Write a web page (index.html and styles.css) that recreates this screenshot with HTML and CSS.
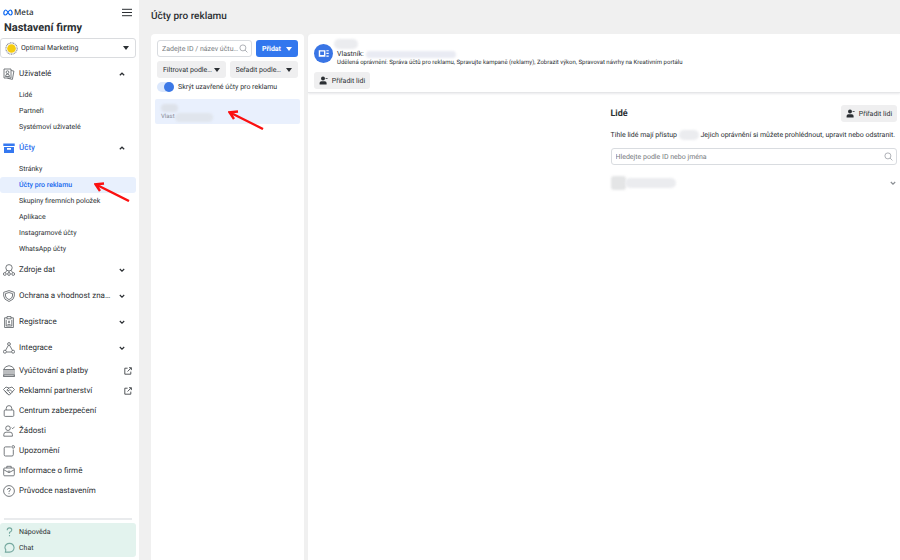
FILE: index.html
```
<!DOCTYPE html>
<html lang="cs">
<head>
    <meta charset="UTF-8">
    <meta name="viewport" content="width=device-width, initial-scale=1.0">
    <title>Nastavení firmy - Účty pro reklamu</title>
    <link rel="stylesheet" href="styles.css">
</head>

<body>
    <!-- Shared icons -->
    <svg class="sprite" aria-hidden="true">
        <symbol id="up" viewBox="0 0 8 8"><path d="M1.800 5.300 4 3.200l2.200 2.100" /></symbol>
        <symbol id="down" viewBox="0 0 8 8"><path d="M1.800 3 4 5.100 6.200 3" /></symbol>
        <symbol id="external" viewBox="0 0 8 8"><path d="M3.600 1.200H.8v6h6V4.600M5 .7h2.400v2.400M7.200.9 3.600 4.500" /></symbol>
        <symbol id="search" viewBox="0 0 9 9"><circle cx="3.900" cy="3.900" r="3" /><path d="M6.100 6.100 8.400 8.400" /></symbol>
        <symbol id="person" viewBox="0 0 9 9"><circle cx="4" cy="2.600" r="2" /><path d="M.6 8.400V7q0-1.800 1.800-1.800h3.400q1.800 0 1.800 1.800v1.400zM6.600 2h2v.8h-2z" /></symbol>
        <symbol id="arrow" viewBox="0 0 36 20"><path d="M35 19 2 2.500M10 1.500 1.500 2.300 6 9" /></symbol>
    </svg>

    <div class="app">
        <nav class="sidebar">
            <div class="brand">
                <svg class="brand-mark" viewBox="0 0 10 7"><path d="M1 5.200C.4 2.800 1.700 1 2.800 1 4.400 1 5.600 6 7.400 6 8.900 6 9.300 4.400 9 3 8.700 1.700 8 1 7.200 1 5.500 1 4.400 6 2.400 6 1.600 6 1.100 5.800 1 5.200z" /></svg>
                <span class="brand-name">Meta</span>
                <button class="burger" type="button" aria-label="Nabídka"><svg viewBox="0 0 10 8"><path d="M0 .8h10M0 4h10M0 7.200h10" /></svg></button>
            </div>
            <h1>Nastavení firmy</h1>
            <div class="business">
                <svg class="business-logo" viewBox="0 0 12 12"><circle class="ring" cx="6" cy="6" r="5.200" /><circle class="sun" cx="6" cy="6" r="4" /></svg>
                <select aria-label="Firma"><option>Optimal Marketing</option></select>
            </div>

            <ul class="menu">
                <li>
                    <button class="group" type="button" aria-expanded="true">
                        <svg class="icon" viewBox="0 0 12 12"><path d="M1 1h7v9H1zM8.200 2.500l2.700.6-1.500 8.300-5-1.200M2.500 8.500q0-2.300 2-2.300t2 2.300z" /><circle cx="4.500" cy="4.200" r="1.400" /></svg>
                        <span>Uživatelé</span><svg class="chevron"><use href="#up" /></svg>
                    </button>
                    <ul class="submenu">
                        <li><a href="#">Lidé</a></li>
                        <li><a href="#">Partneři</a></li>
                        <li><a href="#">Systémoví uživatelé</a></li>
                    </ul>
                </li>
                <li>
                    <button class="group active" type="button" aria-expanded="true">
                        <svg class="icon solid" viewBox="0 0 12 12"><path d="M.3 1.500h11.400v2.600H.3zM1 5h10v6H1zM4 6v1.800h4V6z" fill-rule="evenodd" /></svg>
                        <span>Účty</span><svg class="chevron"><use href="#up" /></svg>
                    </button>
                    <ul class="submenu">
                        <li><a href="#">Stránky</a></li>
                        <li class="selected"><a href="#" aria-current="page">Účty pro reklamu</a><svg class="pointer"><use href="#arrow" /></svg></li>
                        <li><a href="#">Skupiny firemních položek</a></li>
                        <li><a href="#">Aplikace</a></li>
                        <li><a href="#">Instagramové účty</a></li>
                        <li><a href="#">WhatsApp účty</a></li>
                    </ul>
                </li>
                <li>
                    <button class="group" type="button">
                        <svg class="icon" viewBox="0 0 12 12"><circle cx="6" cy="3.800" r="3.200" /><circle cx="1.800" cy="10" r="1.400" /><circle cx="6" cy="10" r="1.400" /><circle cx="10.200" cy="10" r="1.400" /><path d="M6 7v1.600M4 6.300 2.300 8.600M8 6.300l1.700 2.300" /></svg>
                        <span>Zdroje dat</span><svg class="chevron"><use href="#down" /></svg>
                    </button>
                </li>
                <li>
                    <button class="group" type="button">
                        <svg class="icon" viewBox="0 0 12 12"><path d="M6 .6 11.300 2.300V6q0 3.600-5.300 5.500Q.7 9.600.7 6V2.300zM6 2.500 9.500 3.600V6q0 2.200-3.500 3.600Q2.500 8.200 2.500 6V3.600z" /></svg>
                        <span>Ochrana a vhodnost zna…</span><svg class="chevron"><use href="#down" /></svg>
                    </button>
                </li>
                <li>
                    <button class="group" type="button">
                        <svg class="icon" viewBox="0 0 12 12"><path d="M4 1.800H1.600v9.700h8.800V1.800H8M4 .6h4v2.200H4zM3.200 3.800v6.200h5.600V3.800M6 4.500v2.800M5 6h2M4.500 8.600h3" /></svg>
                        <span>Registrace</span><svg class="chevron"><use href="#down" /></svg>
                    </button>
                </li>
                <li>
                    <button class="group" type="button">
                        <svg class="icon" viewBox="0 0 12 12"><circle cx="6" cy="2" r="1.400" /><circle cx="1.900" cy="9.700" r="1.500" /><circle cx="10.100" cy="9.700" r="1.500" /><path d="M5.400 3.300 2.600 8.300M6.600 3.300l2.800 5M3.500 10h5" /></svg>
                        <span>Integrace</span><svg class="chevron"><use href="#down" /></svg>
                    </button>
                </li>
                <li>
                    <a class="entry" href="#">
                        <svg class="icon" viewBox="0 0 12 12"><path d="M.6 4.500Q2 1 6 .7q4 .3 5.400 3.800zM1 4.500v6M3 5v5M5 5v5M7 5v5M9 5v5M11 4.500v6M.3 10h11.400v1.500H.3z" /></svg>
                        <span>Vyúčtování a platby</span><svg class="external"><use href="#external" /></svg>
                    </a>
                </li>
                <li>
                    <a class="entry" href="#">
                        <svg class="icon" viewBox="0 0 12 12"><path d="M.5 4.500 3 2l3 1 3-1 2.500 2.500L6.500 10 5 9.500zM6 3 3.800 5.200q1 1.300 2.400 0L7 4.700l2.800 2.500M5.500 6.500l2.300 2.200M2 6l3.200 3.400" /></svg>
                        <span>Reklamní partnerství</span><svg class="external"><use href="#external" /></svg>
                    </a>
                </li>
                <li>
                    <a class="entry" href="#">
                        <svg class="icon" viewBox="0 0 12 12"><rect x="1.200" y="5" width="9.600" height="6.400" rx="1" /><path d="M3.200 5V3.500q0-2.900 2.800-2.900t2.800 2.900V5" /></svg>
                        <span>Centrum zabezpečení</span>
                    </a>
                </li>
                <li>
                    <a class="entry" href="#">
                        <svg class="icon" viewBox="0 0 12 12"><circle cx="5" cy="3.200" r="2.300" /><path d="M.8 11.200V9.500q0-2.300 2.300-2.300h4q2.300 0 2.300 2.300v1.700zM8.700 2.700l1 1 1.900-2" /></svg>
                        <span>Žádosti</span>
                    </a>
                </li>
                <li>
                    <a class="entry" href="#">
                        <svg class="icon" viewBox="0 0 12 12"><path d="M7.800 1.900H2.500q-1.300 0-1.300 1.300v6.500Q1.200 11 2.500 11H9q1.300 0 1.300-1.300V4.500" /><circle cx="10.200" cy="1.900" r="1.300" /></svg>
                        <span>Upozornění</span>
                    </a>
                </li>
                <li>
                    <a class="entry" href="#">
                        <svg class="icon" viewBox="0 0 12 12"><rect x=".7" y="3" width="10.600" height="7.800" rx="1" /><path d="M3.800 3V1.300h4.400V3M.9 4.800 6 7.700l5.100-2.900M4.800 6.200h2.400" /></svg>
                        <span>Informace o firmě</span>
                    </a>
                </li>
                <li>
                    <a class="entry" href="#">
                        <svg class="icon" viewBox="0 0 12 12"><circle cx="6" cy="6" r="5.400" /><path d="M4.500 4.800Q4.500 3.300 6 3.300t1.500 1.300Q7.500 5.500 6 6.200v.9M6 8.200v.9" /></svg>
                        <span>Průvodce nastavením</span>
                    </a>
                </li>
            </ul>

            <div class="help">
                <a href="#"><svg class="icon" viewBox="0 0 12 12"><path d="M3.500 4Q3.500 1.500 6 1.500t2.500 2.300Q8.500 5 6 6.500v1.500M6 9.300v1.300" /></svg>Nápověda</a>
                <a href="#"><svg class="icon" viewBox="0 0 12 12"><path d="M1.500 10.500 2 8Q1 6.500 1 5.500 1.500 1 6 1t5 4.800Q10.500 10.500 6 10.500z" /></svg>Chat</a>
            </div>
        </nav>

        <main>
            <h2 class="page-title">Účty pro reklamu</h2>
            <div class="columns">
                <section class="accounts">
                    <div class="toolbar">
                        <label class="search">
                            <input type="text" aria-label="Hledat účet" placeholder="Zadejte ID / název účtu…">
                            <svg><use href="#search" /></svg>
                        </label>
                        <button class="add" type="button">Přidat <i class="caret"></i></button>
                    </div>
                    <div class="filters">
                        <div class="dropdown"><select aria-label="Filtrovat"><option>Filtrovat podle…</option></select></div>
                        <div class="dropdown"><select aria-label="Seřadit"><option>Seřadit podle…</option></select></div>
                    </div>
                    <label class="switch"><input type="checkbox" checked>Skrýt uzavřené účty pro reklamu</label>
                    <div class="account">
                        <span class="smudge account-name"></span>
                        <span class="owner">Vlast<span class="smudge account-owner"></span></span>
                        <svg class="pointer"><use href="#arrow" /></svg>
                    </div>
                </section>

                <section class="detail">
                    <header class="detail-head">
                        <div class="identity">
                            <svg class="avatar" viewBox="0 0 20 20"><circle cx="10" cy="10" r="10" /><path d="M5 6.500h7v7H5zM6.500 8v3.500h4V8zM13 6.500h2.500v1.200H13zM13 9.300h2.500v1.200H13zM13 12.200h2.500v1.300H13z" fill-rule="evenodd" /></svg>
                            <div class="identity-text">
                                <span class="smudge detail-name"></span>
                                <p class="detail-owner">Vlastník: <span class="smudge detail-owner-name"></span></p>
                                <p class="rights">Udělená oprávnění: Správa účtů pro reklamu, Spravujte kampaně (reklamy), Zobrazit výkon, Spravovat návrhy na Kreativním portálu</p>
                            </div>
                        </div>
                        <button class="assign" type="button"><svg><use href="#person" /></svg>Přiřadit lidi</button>
                    </header>

                    <div class="detail-body">
                        <div class="people">
                            <div class="people-head">
                                <h3>Lidé</h3>
                                <button class="assign" type="button"><svg><use href="#person" /></svg>Přiřadit lidi</button>
                            </div>
                            <p class="note">Tihle lidé mají přístup <span class="smudge note-name"></span> Jejich oprávnění si můžete prohlédnout, upravit nebo odstranit.</p>
                            <label class="search">
                                <input type="text" aria-label="Hledat lidi" placeholder="Hledejte podle ID nebo jména">
                                <svg><use href="#search" /></svg>
                            </label>
                            <div class="person">
                                <span class="smudge person-photo"></span><span class="smudge person-name"></span>
                                <svg class="chevron"><use href="#down" /></svg>
                            </div>
                        </div>
                    </div>
                </section>
            </div>
        </main>
    </div>
</body>
</html>
```
FILE: styles.css
```
* { margin: 0; padding: 0; border: none; box-sizing: border-box }
body { font-family: Roboto, "Liberation Sans", sans-serif; font-size: 7px; line-height: 10px; color: #2b2f33; background: #f0f0f0; text-rendering: geometricPrecision }
ul { list-style: none }
a { color: inherit; text-decoration: none }
button, input, select { font: inherit; color: inherit; background: none; appearance: none; text-rendering: inherit }
button { cursor: pointer }
svg { flex: none; fill: none; stroke: currentColor }
.sprite { display: none }

.app { display: flex; min-height: 100vh }

/* Sidebar */
.sidebar { flex: none; width: 139px; padding: 7px 3px 3px 0; background: #fff; display: flex; flex-direction: column }
.brand { display: flex; align-items: center; gap: 1px; height: 11px; padding: 0 4px 0 3px }
.brand-mark { width: 10px; height: 7px; color: #0a66f0; stroke-width: 1.2 }
.brand-name { font-family: "Noto Sans", sans-serif; font-size: 8px; font-weight: 500 }
.burger { margin-left: auto; width: 10px; height: 10px }
.burger svg { display: block; width: 10px; height: 9px }
.sidebar h1 { padding-left: 4px; font-size: 11px; line-height: 20px; font-weight: 700 }
.business { position: relative; display: flex; align-items: center; height: 20px; border: 1px solid #dadcdf; border-radius: 3px }
.business-logo { position: absolute; left: 4px; width: 13px; height: 13px }
.business-logo .ring { stroke: #8a8e96; stroke-dasharray: 1 .5 }
.business-logo .sun { fill: #f5cc10; stroke: none }
.business select { width: 100%; height: 100%; padding-left: 20px }
.business::after, .dropdown::after, .caret { content: ""; border: 3px solid transparent; border-top: 4px solid; border-bottom: 0 }
.business::after { position: absolute; right: 6px; pointer-events: none }

.menu { padding-top: 3px }
.group, .entry { display: flex; align-items: center; width: 100%; padding: 0 4px 0 3px; gap: 4px; font-size: 8px; text-align: left }
.group { height: 26px }
.entry { height: 20px }
.icon { width: 12px; height: 12px; color: #555a60; stroke-width: .8 }
.chevron { width: 8px; height: 8px; stroke-width: 1.2 }
.group .chevron { margin-left: auto; margin-right: 6px }
.external { width: 8px; height: 8px; margin-left: auto; stroke-width: .8 }
.group.active > span { color: #2f72ee; font-weight: 500 }
.icon.solid { color: #3578f0; fill: currentColor; stroke: none }
.submenu li { position: relative; height: 16px; line-height: 16px; border-radius: 3px }
.submenu a { display: block; padding-left: 19px }
.submenu .selected { background: #e8f0fd; color: #1769ee; font-weight: 500 }
.pointer { position: absolute; z-index: 1; width: 36px; height: 20px; color: #fb1010; stroke-width: 2.4; pointer-events: none }
.selected .pointer { left: 94px; top: 5px }

.help { margin-top: auto; padding: 1px 0; position: relative; background: #e3f3ee; border-radius: 3px }
.help::before { content: ""; position: absolute; top: -5px; left: 4px; right: 4px; border-top: 2px solid #e9ebed }
.help a { display: flex; align-items: center; gap: 4px; height: 16px; padding-left: 4px }
.help .icon { width: 11px; color: #76a9a0; stroke-width: 1.2 }

/* Page */
main { flex: 1; min-width: 0; display: flex; flex-direction: column; padding-left: 12px }
.page-title { font-size: 10px; line-height: 34px; font-weight: 500 }
.columns { flex: 1; display: flex; gap: 4px }
.accounts { flex: none; width: 153px; padding: 6px 4px; background: #fff; border-radius: 4px 4px 0 0 }
.toolbar, .filters { display: flex; gap: 4px; height: 17px; padding: 0 2px }
.filters { margin-top: 4px }
.search { flex: 1; min-width: 0; display: flex; align-items: center; height: 17px; padding: 0 3px 0 4px; border: 1px solid #d9dce0; border-radius: 3px }
.search input { flex: 1; min-width: 0; outline: none }
.search input::placeholder { color: #777b80; opacity: 1 }
.search svg { width: 9px; height: 9px; color: #9a9ea4; stroke-width: .8 }
.add { display: flex; align-items: center; justify-content: center; gap: 5px; width: 42px; background: #3277ee; border-radius: 3px; color: #fff; font-weight: 700 }
.dropdown { flex: 1; position: relative; display: flex; align-items: center; background: #efeff0; border-radius: 3px }
.dropdown select { width: 100%; height: 100%; padding-left: 6px }
.dropdown::after { position: absolute; right: 6px; pointer-events: none }
.switch { display: flex; align-items: center; gap: 4px; height: 17px; padding-left: 2px }
.switch input { width: 17px; height: 10px; border-radius: 5px; background: #dce8fc; display: flex; justify-content: flex-end }
.switch input::before { content: ""; width: 10px; height: 10px; border-radius: 50%; background: #3c78e6 }
.account { position: relative; display: flex; flex-direction: column; margin-top: 4px; padding: 5px 6px 2px; background: #e9f0fd; border-radius: 2px }
.account .pointer { left: 73px; top: 11px }
.owner { display: flex; align-items: center; font-size: 6px; color: #858b95 }

/* Hidden names */
.smudge { display: inline-block; border-radius: 5px; background: #ebecef; filter: blur(1px) }
.account-name { width: 17px; height: 8px; background: #dde2ea }
.account-owner { width: 38px; height: 9px; background: #e0e5ed }
.detail-name { display: block; width: 24px; height: 10px; margin-left: -3px }
.detail-owner-name { width: 90px; height: 7px; background: #e9ebf3 }
.note-name { width: 20px; height: 10px; vertical-align: middle }
.person-photo { width: 15px; height: 14px; border-radius: 3px; background: #e4e5e6 }
.person-name { width: 51px; height: 10px; margin-left: -1px }

/* Account detail */
.detail { flex: 1; min-width: 0; background: #fff; border-radius: 4px 0 0 0 }
.detail-head { padding: 5px 6px 3px; border-bottom: 1px solid #e5e6e8; box-shadow: 0 1px 2px #e9eaec }
.identity { display: flex; align-items: center; gap: 4px }
.avatar { width: 19px; height: 19px; stroke: none; fill: #fff }
.avatar circle { fill: #3975e5 }
.detail-owner { display: flex; align-items: center; gap: 2px }
.rights { font-size: 6px; line-height: 8px }
.assign { display: flex; align-items: center; justify-content: center; gap: 4px; width: 56px; height: 17px; background: #efeff0; border-radius: 3px }
.assign svg { width: 9px; height: 9px; fill: currentColor; stroke: none }
.detail-head .assign { margin-top: 5px }
.detail-body { display: grid; grid-template-columns: 1fr 1fr; gap: 10px; padding: 12px 3px 0 6px }
.people { grid-column: 2; min-width: 0 }
.people-head { display: flex; align-items: center; justify-content: space-between }
.people h3 { font-size: 9px; font-weight: 700 }
.note { margin: 8px 0; white-space: nowrap }
.person { display: flex; align-items: center; margin-top: 11px }
.person .chevron { margin-left: auto; color: #8b8f94 }
```
